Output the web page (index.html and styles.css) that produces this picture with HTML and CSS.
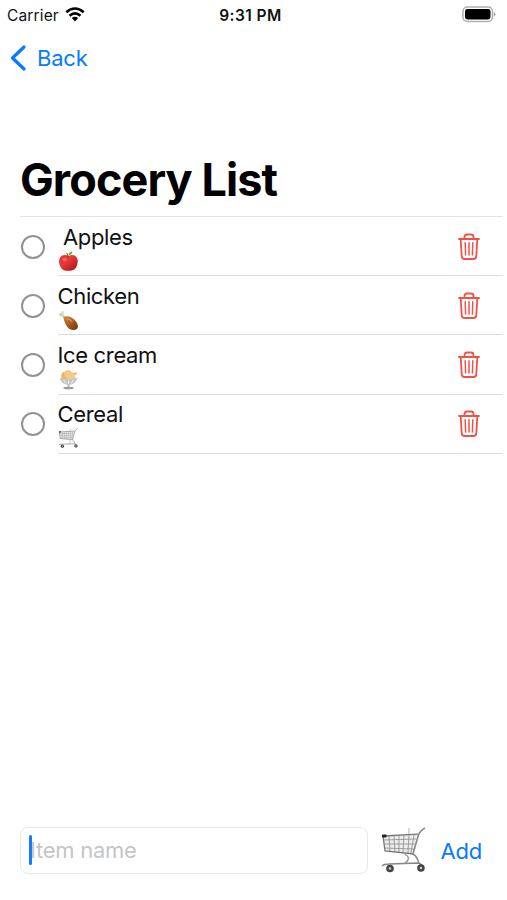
FILE: index.html
```html
<!DOCTYPE html>
<html lang="en">
<head>
  <meta charset="UTF-8">
  <meta name="viewport" content="width=device-width, initial-scale=1.0">
  <title>Grocery List</title>
  <link rel="stylesheet" href="styles.css">
</head>
<body>
  <!-- Shared icons -->
  <svg class="icon-defs">
    <symbol id="trash" viewBox="0 0 22 28">
      <g fill="none" stroke="#ee5349" stroke-width="1.8" stroke-linecap="round" stroke-linejoin="round">
        <path d="M1 6H21M6.5 5.8V3.9Q6.5 1.5 9 1.5H13Q15.5 1.5 15.5 3.9V5.8"/>
        <path d="M2.7 6.3L3.7 23.4Q3.9 26 6.5 26H15.5Q18.1 26 18.3 23.4L19.3 6.3"/>
        <path d="M7.2 9.7L7.6 22M11 9.7V22M14.8 9.7L14.4 22" stroke-width="1.5"/>
      </g>
    </symbol>
    <symbol id="cart" viewBox="0 0 46 48">
      <path d="M2 9L37 7L32 26L4 24Z" fill="#ececec"/>
      <g fill="none" stroke="#959595" stroke-width="0.9">
        <path d="M2 13L35 12M3 17L34 17M3 21L33 22"/>
        <path d="M8 9L9 25M13 9L14 25M18 8L18 25M23 8L22 26M28 8L27 26M33 8L30 26"/>
        <path d="M28 1V8" stroke="#aaa"/>
      </g>
      <path d="M2 9L37 7M2 9L4 24L33 27" fill="none" stroke="#777" stroke-width="1.3"/>
      <path d="M44 1Q39 4 37.5 8L32 27Q37 30 37.5 36" fill="none" stroke="#8b8b8b" stroke-width="1.6"/>
      <path d="M24 27Q27 29 27.500 31Q27.500 34 24 36" fill="none" stroke="#999" stroke-width="1.3"/>
      <path d="M1 39Q3 37 8 37L38 36L41 38" fill="none" stroke="#858585" stroke-width="1.6"/>
      <rect x="1" y="7.5" width="4.5" height="3" rx="1" fill="#222"/>
      <circle cx="9" cy="41.5" r="3.8" fill="#444"/>
      <circle cx="9" cy="41.5" r="1.3" fill="#ccc"/>
      <circle cx="40" cy="41" r="3.8" fill="#444"/>
      <circle cx="40" cy="41" r="1.3" fill="#ccc"/>
    </symbol>
    <linearGradient id="appleFill" x1="0" y1="0" x2="1" y2="1">
      <stop offset="0" stop-color="#e5332e"/>
      <stop offset=".4" stop-color="#e63b39"/>
      <stop offset="1" stop-color="#a90f14"/>
    </linearGradient>
    <linearGradient id="meatFill" x1="0" y1="0" x2="1" y2="1">
      <stop offset="0" stop-color="#d68a3d"/>
      <stop offset="1" stop-color="#753009"/>
    </linearGradient>
  </svg>

  <div class="screen">
    <header class="status-bar">
      <div class="carrier">
        <span>Carrier</span>
        <svg class="wifi" viewBox="0 0 20 15">
          <path d="M1.3 5.3Q10-2.3 18.7 5.3M4.5 8.8Q10 4 15.5 8.8" fill="none" stroke="#000" stroke-width="2.5"/>
          <path d="M6.8 11.1Q10 8.4 13.2 11.1L10 14.4Z"/>
        </svg>
      </div>
      <div class="time">9:31 PM</div>
      <svg class="battery" viewBox="0 0 34 17">
        <rect x="1" y="1" width="29.5" height="14.5" rx="4.3" fill="#fff" stroke="#b0b0b0" stroke-width="1.5"/>
        <rect x="3" y="3" width="25.5" height="10.5" rx="2.4"/>
        <path d="M31.8 6Q33.5 6.5 33.5 8.3T31.8 10.5Z" fill="#aaa"/>
      </svg>
    </header>

    <a class="back" href="#">
      <svg viewBox="0 0 16 26"><path d="M14 2L2.5 13L14 24" fill="none" stroke="#087aff" stroke-width="3.2" stroke-linecap="round" stroke-linejoin="round"/></svg>
      <span>Back</span>
    </a>

    <h1 class="title">Grocery List</h1>

    <ul class="list">
      <li class="item">
        <span class="check"></span>
        <div class="item-body">
          <div class="item-text">
            <div class="name name-indent">Apples</div>
            <svg class="emoji" viewBox="0 0 22 22">
              <path d="M11 5.2Q7 3.500 4 5Q0 8 1.5 14Q3.5 20.500 8 20.800Q11 20.800 13 20.800Q18 20.500 20 15Q22 8 18 5Q15 3.500 11 5.2Z" fill="url(#appleFill)"/>
              <path d="M10.5 6.5Q10.5 3.5 9 2.5" fill="none" stroke="#7a4a22" stroke-width="1.2"/>
              <path d="M11 4.5Q11 1 15 .5Q15 4 11 4.5Z" fill="#68b32c"/>
              <ellipse cx="7" cy="9" rx="2.4" ry="1.8" fill="#ff8d86" opacity=".5"/>
            </svg>
          </div>
          <svg class="trash"><use href="#trash"/></svg>
        </div>
      </li>
      <li class="item">
        <span class="check"></span>
        <div class="item-body">
          <div class="item-text">
            <div class="name">Chicken</div>
            <svg class="emoji" viewBox="0 0 22 22">
              <path d="M3 4L9 10" stroke="#d6d4c4" stroke-width="2.6"/>
              <circle cx="2.8" cy="4.8" r="1.7" fill="#c9ccb9"/>
              <circle cx="5" cy="2.8" r="1.7" fill="#dcdccf"/>
              <path d="M5.5 7Q12 5 17 10Q22 15 20.5 19Q17 22.5 12 20Q7 16 5.5 7Z" fill="url(#meatFill)"/>
              <path d="M9 9Q12 9 15 12" fill="none" stroke="#e9ab63" stroke-width="1.4" opacity=".7"/>
            </svg>
          </div>
          <svg class="trash"><use href="#trash"/></svg>
        </div>
      </li>
      <li class="item">
        <span class="check"></span>
        <div class="item-body">
          <div class="item-text">
            <div class="name">Ice cream</div>
            <svg class="emoji" viewBox="0 0 22 22">
              <ellipse cx="11" cy="20" rx="5.5" ry="1.3" fill="#999"/>
              <path d="M10 15H12V19H10Z" fill="#bbb"/>
              <circle cx="7.5" cy="7" r="4" fill="#e9b565"/>
              <circle cx="14" cy="7.5" r="4" fill="#f2cd93"/>
              <circle cx="10.5" cy="5" r="4" fill="#f6ca80"/>
              <path d="M15 5L20 3.5L19 6" fill="#eba553"/>
              <path d="M1.5 9Q11 12 20.5 9Q19 16 11 17Q3 16 1.5 9Z" fill="#c6c6c6"/>
              <path d="M6 11.5L8 15M11 12V15.5M16 11.5L14 15" stroke="#f3f3f3"/>
            </svg>
          </div>
          <svg class="trash"><use href="#trash"/></svg>
        </div>
      </li>
      <li class="item">
        <span class="check"></span>
        <div class="item-body">
          <div class="item-text">
            <div class="name">Cereal</div>
            <svg class="emoji"><use href="#cart"/></svg>
          </div>
          <svg class="trash"><use href="#trash"/></svg>
        </div>
      </li>
    </ul>

    <div class="add-bar">
      <div class="field"><span class="caret"></span>Item name</div>
      <svg class="cart"><use href="#cart"/></svg>
      <a class="add" href="#">Add</a>
    </div>
  </div>
</body>
</html>
```
FILE: styles.css
```css
body {
  margin: 0;
  background-color: #fff;
  color: #111;
  font-family: Inter, "Liberation Sans", sans-serif;
}

.icon-defs {
  position: absolute;
  width: 0;
  height: 0;
}

.screen {
  display: flex;
  flex-direction: column;
  width: 507px;
  height: 900px;
  overflow: hidden;
}

/* Status bar */
.status-bar {
  display: grid;
  grid-template-columns: 1fr auto 1fr;
  align-items: center;
  height: 29px;
  padding: 0 11px 0 7px;
}

.carrier {
  display: flex;
  align-items: center;
  gap: 6px;
  font-size: 15.5px;
  letter-spacing: 0.15px;
}

.carrier span,
.time {
  padding-top: 2px;
}

.wifi {
  width: 20px;
  height: 15px;
}

.time {
  margin-left: -2px;
  font-size: 15.5px;
  font-weight: 600;
  letter-spacing: 0.45px;
}

.battery {
  justify-self: end;
  width: 34px;
  height: 17px;
}

/* Navigation */
.back {
  display: flex;
  align-items: center;
  gap: 11px;
  height: 57px;
  padding-left: 10px;
  color: #087aff;
  font-size: 22px;
  letter-spacing: -0.2px;
  text-decoration: none;
}

.back svg {
  width: 16px;
  height: 26px;
}

.title {
  margin: 63px 0 0 20px;
  height: 67px;
  line-height: 62px;
  font-size: 45px;
  font-weight: 700;
  letter-spacing: -0.9px;
  color: #000;
}

/* Grocery items */
.list {
  list-style: none;
  margin: 0 4px 0 20px;
  padding: 0;
  border-top: 1.5px solid #e4e4e4;
}

.item {
  display: flex;
  align-items: center;
  gap: 12.5px;
  height: 59.2px;
}

.check {
  box-sizing: border-box;
  width: 24px;
  height: 24px;
  margin-left: 1px;
  border: 2px solid #929292;
  border-radius: 50%;
}

.item-body {
  box-sizing: border-box;
  display: flex;
  flex: 1;
  align-items: center;
  justify-content: space-between;
  height: 100%;
  padding-right: 23.5px;
  border-bottom: 1px solid #dcdcdc;
}

.item-text {
  display: flex;
  flex-direction: column;
  padding-top: 4px;
}

.name {
  height: 27px;
  line-height: 27px;
  margin-top: -1px;
  font-size: 22px;
  letter-spacing: -0.35px;
}

.name-indent {
  padding-left: 5.5px;
}

.emoji {
  width: 21px;
  height: 21px;
}

.trash {
  width: 22px;
  height: 28px;
  padding-top: 1px;
}

/* Bottom bar */
.add-bar {
  display: flex;
  align-items: center;
  margin-top: auto;
  padding: 0 25px 25px 20px;
}

.field {
  position: relative;
  box-sizing: border-box;
  width: 348px;
  height: 47px;
  line-height: 44px;
  padding-left: 9px;
  border: 1.5px solid #e8e8e8;
  border-radius: 8px;
  color: #c5c5c7;
  font-size: 22px;
  letter-spacing: -0.25px;
}

.caret {
  position: absolute;
  top: 7px;
  left: 8px;
  width: 3px;
  height: 30px;
  border-radius: 2px;
  background-color: #147aff;
}

.cart {
  width: 46px;
  height: 48px;
  margin-left: 13px;
  padding-top: 1px;
}

.add {
  margin-left: 14px;
  color: #087aff;
  font-size: 22px;
  letter-spacing: -0.2px;
  text-decoration: none;
}
```
